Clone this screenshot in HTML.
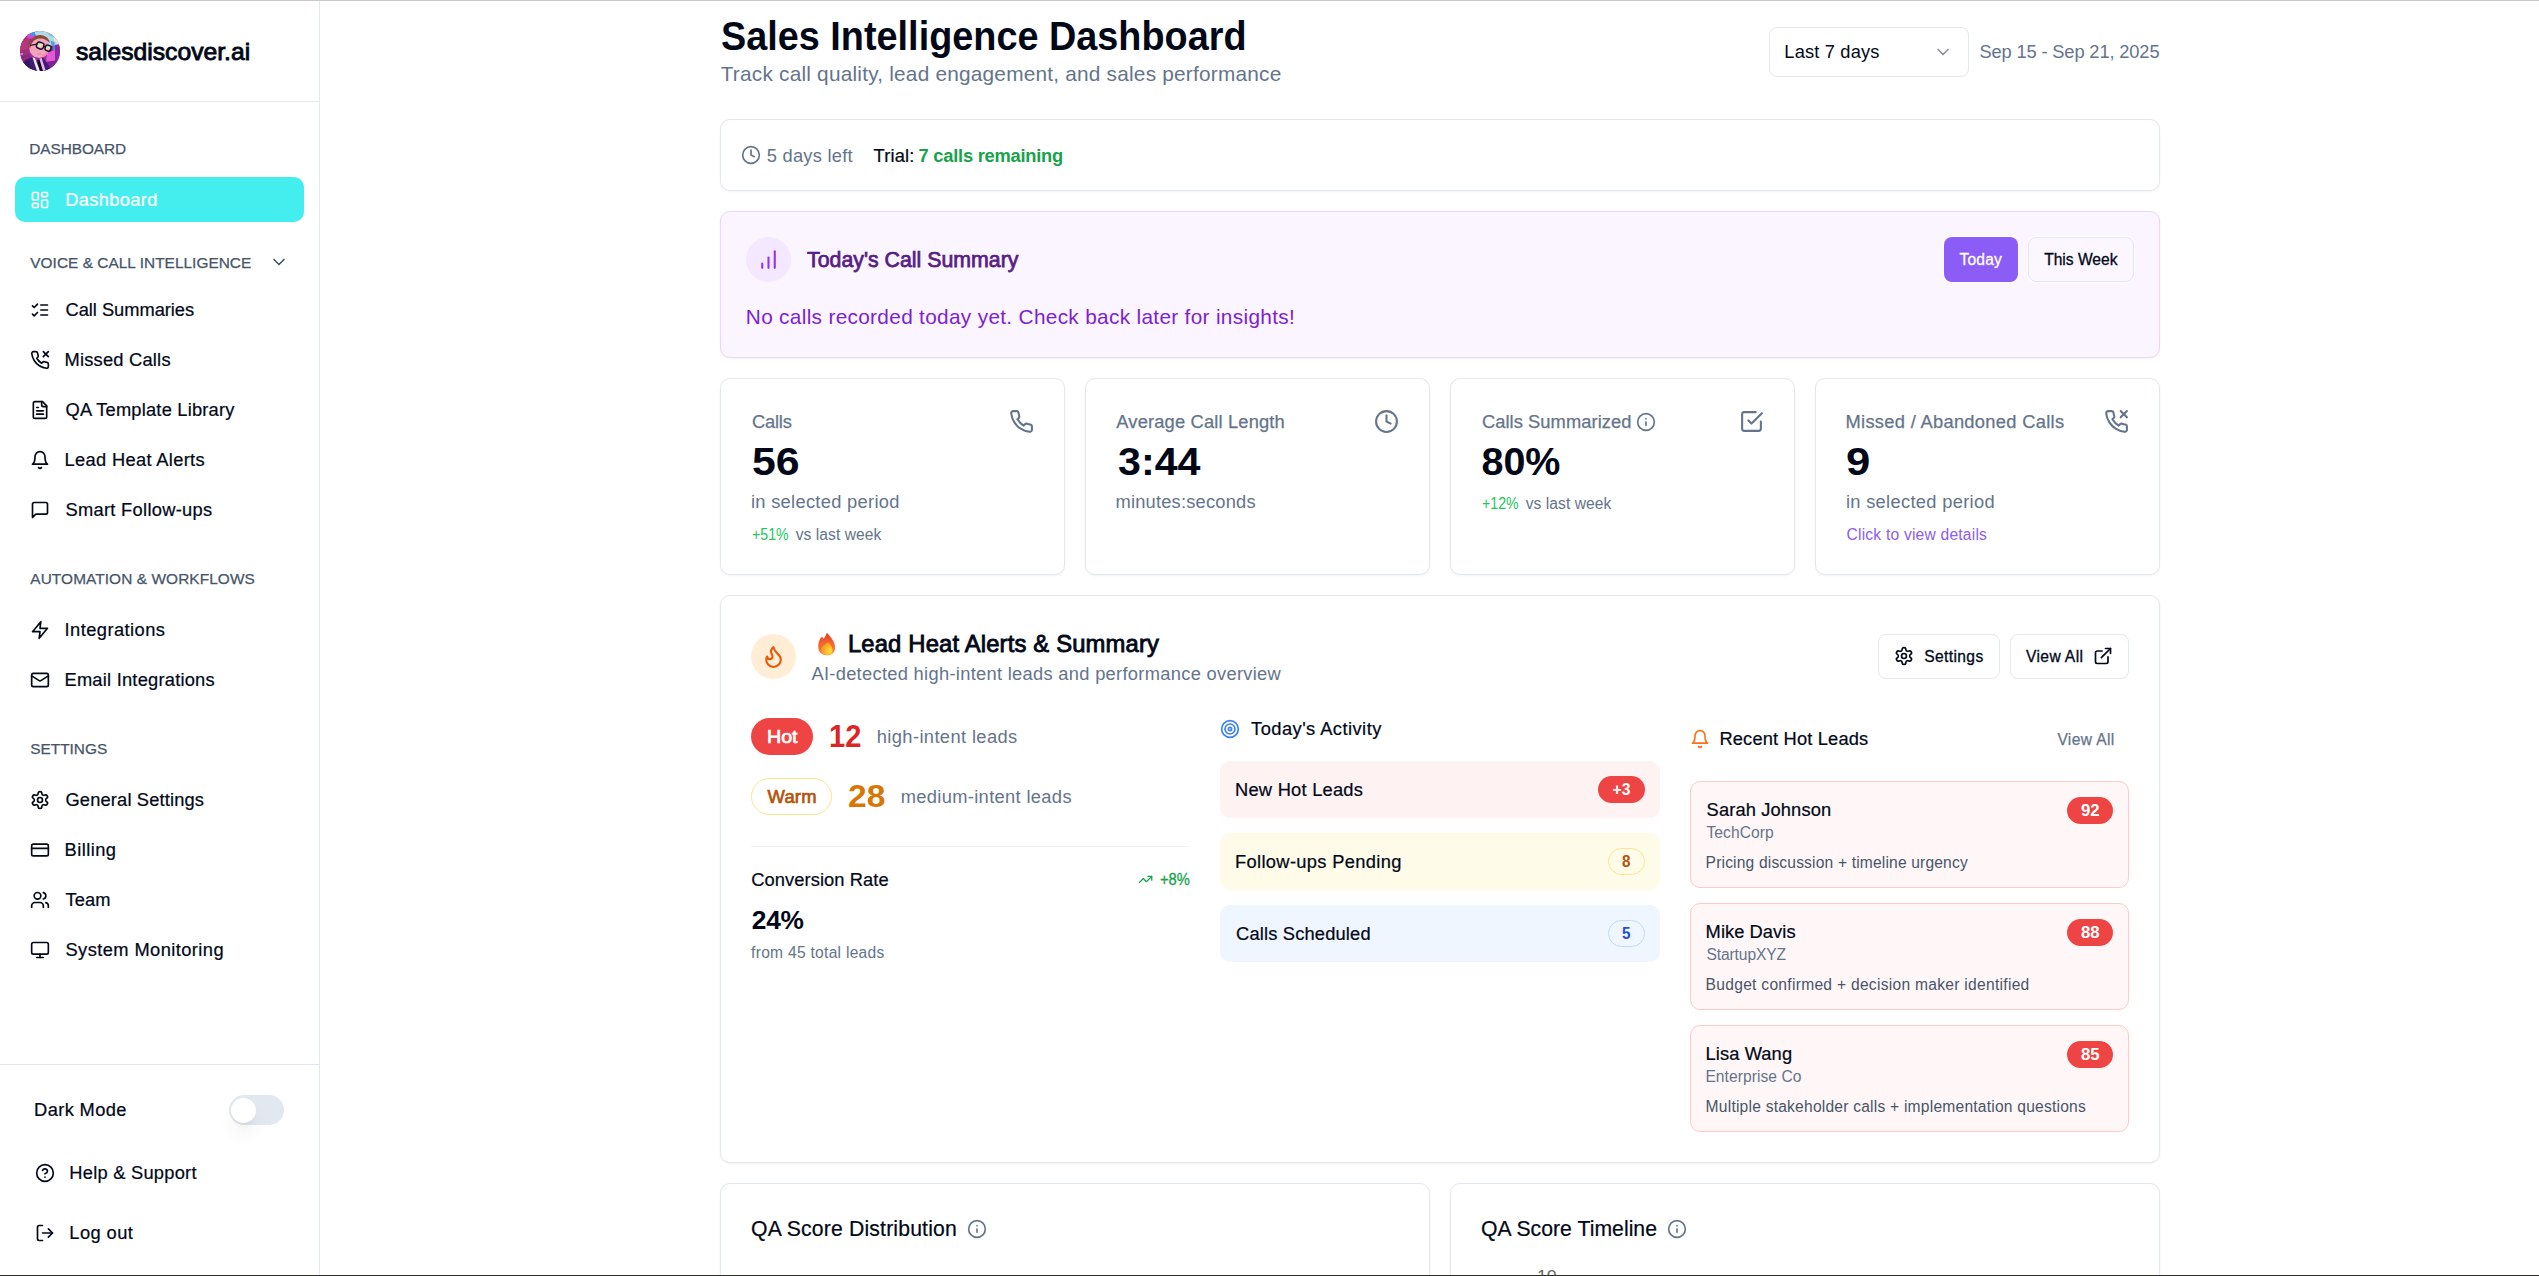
<!DOCTYPE html><html><head><meta charset="utf-8"><title>Sales Intelligence Dashboard</title><style>
html,body{margin:0;padding:0;background:#fff;overflow:hidden;}
body{width:2539px;height:1276px;position:relative;overflow:hidden;font-family:"Liberation Sans", sans-serif;}
.b{position:absolute;box-sizing:border-box;}
.i{position:absolute;overflow:visible;}
.t{position:absolute;white-space:pre;line-height:0;height:0;display:block;}
</style></head><body>
<div class="b" style="left:319px;top:0px;width:1px;height:1276px;background:#e2e8f0;"></div>
<div class="b" style="left:0px;top:101px;width:319px;height:1px;background:#e2e8f0;"></div>
<div class="b" style="left:0px;top:1064px;width:319px;height:1px;background:#e2e8f0;"></div>
<div class="b" style="left:15px;top:177px;width:289px;height:45px;background:#45eeee;border-radius:10px;"></div>
<div class="b" style="left:229px;top:1095px;width:55px;height:30px;background:#e2e8f0;border-radius:15px;"></div>
<div class="b" style="left:230.6px;top:1097.6px;width:25px;height:25px;background:#ffffff;border-radius:12.5px;box-shadow:0 12px 19px -4px rgba(0,0,0,0.1), 0 5px 7.5px -5px rgba(0,0,0,0.1);"></div>
<div class="b" style="left:1769px;top:27px;width:200px;height:50px;background:#fff;border:1px solid #e2e8f0;border-radius:8px;"></div>
<div class="b" style="left:720px;top:119px;width:1440px;height:72px;background:#fff;border:1px solid #e2e8f0;border-radius:10px;box-shadow:0 1px 2.5px 0 rgba(0,0,0,0.05);"></div>
<div class="b" style="left:720px;top:211px;width:1440px;height:147px;background:#faf5ff;border:1px solid #e9d5ff;border-radius:10px;box-shadow:0 1px 2.5px 0 rgba(0,0,0,0.05);"></div>
<div class="b" style="left:746px;top:237px;width:45px;height:45px;background:#f3e8ff;border-radius:22.5px;"></div>
<div class="b" style="left:1944px;top:237px;width:74px;height:45px;background:#8b5cf6;border-radius:8px;box-shadow:0 0 0 1.2px rgba(255,255,255,0.75);"></div>
<div class="b" style="left:2028px;top:237px;width:106px;height:45px;background:#fbf6ff;border:1px solid #e2e8f0;border-radius:8px;box-shadow:0 0 0 1.2px rgba(255,255,255,0.75);"></div>
<div class="b" style="left:720px;top:378px;width:345px;height:197px;background:#fff;border:1px solid #e2e8f0;border-radius:10px;box-shadow:0 1px 2.5px 0 rgba(0,0,0,0.05);"></div>
<div class="b" style="left:1085px;top:378px;width:345px;height:197px;background:#fff;border:1px solid #e2e8f0;border-radius:10px;box-shadow:0 1px 2.5px 0 rgba(0,0,0,0.05);"></div>
<div class="b" style="left:1450px;top:378px;width:345px;height:197px;background:#fff;border:1px solid #e2e8f0;border-radius:10px;box-shadow:0 1px 2.5px 0 rgba(0,0,0,0.05);"></div>
<div class="b" style="left:1815px;top:378px;width:345px;height:197px;background:#fff;border:1px solid #e2e8f0;border-radius:10px;box-shadow:0 1px 2.5px 0 rgba(0,0,0,0.05);"></div>
<div class="b" style="left:720px;top:595px;width:1440px;height:568px;background:#fff;border:1px solid #e2e8f0;border-radius:10px;box-shadow:0 1px 2.5px 0 rgba(0,0,0,0.05);"></div>
<div class="b" style="left:751px;top:634px;width:45px;height:45px;background:#ffedd5;border-radius:22.5px;"></div>
<div class="b" style="left:1878px;top:634px;width:122px;height:45px;background:#fff;border:1px solid #e2e8f0;border-radius:8px;"></div>
<div class="b" style="left:2010px;top:634px;width:119px;height:45px;background:#fff;border:1px solid #e2e8f0;border-radius:8px;"></div>
<div class="b" style="left:751px;top:718px;width:62px;height:37px;background:#ef4444;border-radius:18.5px;"></div>
<div class="b" style="left:751px;top:778px;width:81px;height:37px;background:#fff;border:1px solid #fde68a;border-radius:18.5px;"></div>
<div class="b" style="left:751px;top:846px;width:439px;height:1px;background:#eef2f6;"></div>
<div class="b" style="left:1220px;top:761px;width:440px;height:57px;background:#fef2f2;border-radius:10px;"></div>
<div class="b" style="left:1598px;top:776px;width:47px;height:27px;background:#ef4444;border-radius:13.5px;"></div>
<div class="b" style="left:1220px;top:833px;width:440px;height:57px;background:#fefce8;border-radius:10px;"></div>
<div class="b" style="left:1608px;top:848px;width:37px;height:27px;background:#fefce8;border:1px solid #fde68a;border-radius:13.5px;"></div>
<div class="b" style="left:1220px;top:905px;width:440px;height:57px;background:#eff6ff;border-radius:10px;"></div>
<div class="b" style="left:1608px;top:920px;width:37px;height:27px;background:#eff6ff;border:1px solid #bfdbfe;border-radius:13.5px;"></div>
<div class="b" style="left:1690px;top:781px;width:439px;height:107px;background:#fff7f7;border:1px solid #fecaca;border-radius:10px;"></div>
<div class="b" style="left:2067px;top:797px;width:46px;height:27px;background:#ef4444;border-radius:13.5px;"></div>
<div class="b" style="left:1690px;top:903px;width:439px;height:107px;background:#fff7f7;border:1px solid #fecaca;border-radius:10px;"></div>
<div class="b" style="left:2067px;top:919px;width:46px;height:27px;background:#ef4444;border-radius:13.5px;"></div>
<div class="b" style="left:1690px;top:1025px;width:439px;height:107px;background:#fff7f7;border:1px solid #fecaca;border-radius:10px;"></div>
<div class="b" style="left:2067px;top:1041px;width:46px;height:27px;background:#ef4444;border-radius:13.5px;"></div>
<div class="b" style="left:720px;top:1183px;width:710px;height:120px;background:#fff;border:1px solid #e2e8f0;border-radius:10px;box-shadow:0 1px 2.5px 0 rgba(0,0,0,0.05);"></div>
<div class="b" style="left:1450px;top:1183px;width:710px;height:120px;background:#fff;border:1px solid #e2e8f0;border-radius:10px;box-shadow:0 1px 2.5px 0 rgba(0,0,0,0.05);"></div>
<div class="b" style="left:0px;top:0px;width:2539px;height:1px;background:#c9c9c9;z-index:50;"></div>
<div class="b" style="left:0px;top:1275px;width:2539px;height:1px;background:#2c3029;z-index:50;"></div>
<svg class="i" style="left:30px;top:190px;" width="20" height="20" viewBox="0 0 24 24" fill="none" stroke="#ffffff" stroke-width="2" stroke-linecap="round" stroke-linejoin="round"><rect width="7" height="9" x="3" y="3" rx="1"/><rect width="7" height="5" x="14" y="3" rx="1"/><rect width="7" height="9" x="14" y="12" rx="1"/><rect width="7" height="5" x="3" y="16" rx="1"/></svg>
<svg class="i" style="left:269px;top:252px;" width="20" height="20" viewBox="0 0 24 24" fill="none" stroke="#475569" stroke-width="2" stroke-linecap="round" stroke-linejoin="round"><path d="m6 9 6 6 6-6"/></svg>
<svg class="i" style="left:30px;top:300px;" width="20" height="20" viewBox="0 0 24 24" fill="none" stroke="#020817" stroke-width="2" stroke-linecap="round" stroke-linejoin="round"><path d="m3 17 2 2 4-4"/><path d="m3 7 2 2 4-4"/><path d="M13 6h8"/><path d="M13 12h8"/><path d="M13 18h8"/></svg>
<svg class="i" style="left:30px;top:350px;" width="20" height="20" viewBox="0 0 24 24" fill="none" stroke="#020817" stroke-width="2" stroke-linecap="round" stroke-linejoin="round"><line x1="22" x2="16" y1="2" y2="8"/><line x1="16" x2="22" y1="2" y2="8"/><path d="M22 16.92v3a2 2 0 0 1-2.18 2 19.79 19.79 0 0 1-8.63-3.07 19.5 19.5 0 0 1-6-6 19.79 19.79 0 0 1-3.07-8.67A2 2 0 0 1 4.11 2h3a2 2 0 0 1 2 1.72 12.84 12.84 0 0 0 .7 2.81 2 2 0 0 1-.45 2.11L8.09 9.91a16 16 0 0 0 6 6l1.27-1.27a2 2 0 0 1 2.11-.45 12.84 12.84 0 0 0 2.81.7A2 2 0 0 1 22 16.92z"/></svg>
<svg class="i" style="left:30px;top:400px;" width="20" height="20" viewBox="0 0 24 24" fill="none" stroke="#020817" stroke-width="2" stroke-linecap="round" stroke-linejoin="round"><path d="M15 2H6a2 2 0 0 0-2 2v16a2 2 0 0 0 2 2h12a2 2 0 0 0 2-2V7Z"/><path d="M14 2v4a2 2 0 0 0 2 2h4"/><path d="M10 9H8"/><path d="M16 13H8"/><path d="M16 17H8"/></svg>
<svg class="i" style="left:30px;top:450px;" width="20" height="20" viewBox="0 0 24 24" fill="none" stroke="#020817" stroke-width="2" stroke-linecap="round" stroke-linejoin="round"><path d="M6 8a6 6 0 0 1 12 0c0 7 3 9 3 9H3s3-2 3-9"/><path d="M10.3 21a1.94 1.94 0 0 0 3.4 0"/></svg>
<svg class="i" style="left:30px;top:500px;" width="20" height="20" viewBox="0 0 24 24" fill="none" stroke="#020817" stroke-width="2" stroke-linecap="round" stroke-linejoin="round"><path d="M21 15a2 2 0 0 1-2 2H7l-4 4V5a2 2 0 0 1 2-2h14a2 2 0 0 1 2 2z"/></svg>
<svg class="i" style="left:30px;top:620px;" width="20" height="20" viewBox="0 0 24 24" fill="none" stroke="#020817" stroke-width="2" stroke-linecap="round" stroke-linejoin="round"><polygon points="13 2 3 14 12 14 11 22 21 10 12 10 13 2"/></svg>
<svg class="i" style="left:30px;top:670px;" width="20" height="20" viewBox="0 0 24 24" fill="none" stroke="#020817" stroke-width="2" stroke-linecap="round" stroke-linejoin="round"><rect width="20" height="16" x="2" y="4" rx="2"/><path d="m22 7-8.97 5.7a1.94 1.94 0 0 1-2.06 0L2 7"/></svg>
<svg class="i" style="left:30px;top:790px;" width="20" height="20" viewBox="0 0 24 24" fill="none" stroke="#020817" stroke-width="2" stroke-linecap="round" stroke-linejoin="round"><path d="M12.22 2h-.44a2 2 0 0 0-2 2v.18a2 2 0 0 1-1 1.73l-.43.25a2 2 0 0 1-2 0l-.15-.08a2 2 0 0 0-2.73.73l-.22.38a2 2 0 0 0 .73 2.73l.15.1a2 2 0 0 1 1 1.72v.51a2 2 0 0 1-1 1.74l-.15.09a2 2 0 0 0-.73 2.73l.22.38a2 2 0 0 0 2.73.73l.15-.08a2 2 0 0 1 2 0l.43.25a2 2 0 0 1 1 1.73V20a2 2 0 0 0 2 2h.44a2 2 0 0 0 2-2v-.18a2 2 0 0 1 1-1.73l.43-.25a2 2 0 0 1 2 0l.15.08a2 2 0 0 0 2.73-.73l.22-.39a2 2 0 0 0-.73-2.73l-.15-.08a2 2 0 0 1-1-1.74v-.5a2 2 0 0 1 1-1.74l.15-.09a2 2 0 0 0 .73-2.73l-.22-.38a2 2 0 0 0-2.73-.73l-.15.08a2 2 0 0 1-2 0l-.43-.25a2 2 0 0 1-1-1.73V4a2 2 0 0 0-2-2z"/><circle cx="12" cy="12" r="3"/></svg>
<svg class="i" style="left:30px;top:840px;" width="20" height="20" viewBox="0 0 24 24" fill="none" stroke="#020817" stroke-width="2" stroke-linecap="round" stroke-linejoin="round"><rect width="20" height="14" x="2" y="5" rx="2"/><line x1="2" x2="22" y1="10" y2="10"/></svg>
<svg class="i" style="left:30px;top:890px;" width="20" height="20" viewBox="0 0 24 24" fill="none" stroke="#020817" stroke-width="2" stroke-linecap="round" stroke-linejoin="round"><path d="M16 21v-2a4 4 0 0 0-4-4H6a4 4 0 0 0-4 4v2"/><circle cx="9" cy="7" r="4"/><path d="M22 21v-2a4 4 0 0 0-3-3.87"/><path d="M16 3.13a4 4 0 0 1 0 7.75"/></svg>
<svg class="i" style="left:30px;top:940px;" width="20" height="20" viewBox="0 0 24 24" fill="none" stroke="#020817" stroke-width="2" stroke-linecap="round" stroke-linejoin="round"><rect width="20" height="14" x="2" y="3" rx="2"/><line x1="8" x2="16" y1="21" y2="21"/><line x1="12" x2="12" y1="17" y2="21"/></svg>
<svg class="i" style="left:35px;top:1163px;" width="20" height="20" viewBox="0 0 24 24" fill="none" stroke="#020817" stroke-width="2" stroke-linecap="round" stroke-linejoin="round"><circle cx="12" cy="12" r="10"/><path d="M9.09 9a3 3 0 0 1 5.83 1c0 2-3 3-3 3"/><path d="M12 17h.01"/></svg>
<svg class="i" style="left:35px;top:1223px;" width="20" height="20" viewBox="0 0 24 24" fill="none" stroke="#020817" stroke-width="2" stroke-linecap="round" stroke-linejoin="round"><path d="M9 21H5a2 2 0 0 1-2-2V5a2 2 0 0 1 2-2h4"/><polyline points="16 17 21 12 16 7"/><line x1="21" x2="9" y1="12" y2="12"/></svg>
<svg class="i" style="left:1933px;top:42px;" width="20" height="20" viewBox="0 0 24 24" fill="none" stroke="#8a8f9b" stroke-width="2" stroke-linecap="round" stroke-linejoin="round"><path d="m6 9 6 6 6-6"/></svg>
<svg class="i" style="left:741px;top:145px;" width="20" height="20" viewBox="0 0 24 24" fill="none" stroke="#64748b" stroke-width="2" stroke-linecap="round" stroke-linejoin="round"><circle cx="12" cy="12" r="10"/><polyline points="12 6 12 12 16 14"/></svg>
<svg class="i" style="left:756px;top:247px;" width="25" height="25" viewBox="0 0 24 24" fill="none" stroke="#9333ea" stroke-width="2" stroke-linecap="round" stroke-linejoin="round"><line x1="12" x2="12" y1="20" y2="10"/><line x1="18" x2="18" y1="20" y2="4"/><line x1="6" x2="6" y1="20" y2="16"/></svg>
<svg class="i" style="left:1009px;top:409px;" width="25" height="25" viewBox="0 0 24 24" fill="none" stroke="#64748b" stroke-width="2" stroke-linecap="round" stroke-linejoin="round"><path d="M22 16.92v3a2 2 0 0 1-2.18 2 19.79 19.79 0 0 1-8.63-3.07 19.5 19.5 0 0 1-6-6 19.79 19.79 0 0 1-3.07-8.67A2 2 0 0 1 4.11 2h3a2 2 0 0 1 2 1.72 12.84 12.84 0 0 0 .7 2.81 2 2 0 0 1-.45 2.11L8.09 9.91a16 16 0 0 0 6 6l1.27-1.27a2 2 0 0 1 2.11-.45 12.84 12.84 0 0 0 2.81.7A2 2 0 0 1 22 16.92z"/></svg>
<svg class="i" style="left:1374px;top:409px;" width="25" height="25" viewBox="0 0 24 24" fill="none" stroke="#64748b" stroke-width="2" stroke-linecap="round" stroke-linejoin="round"><circle cx="12" cy="12" r="10"/><polyline points="12 6 12 12 16 14"/></svg>
<svg class="i" style="left:1636px;top:412px;" width="20" height="20" viewBox="0 0 24 24" fill="none" stroke="#64748b" stroke-width="2" stroke-linecap="round" stroke-linejoin="round"><circle cx="12" cy="12" r="10"/><path d="M12 16v-4"/><path d="M12 8h.01"/></svg>
<svg class="i" style="left:1739px;top:409px;" width="25" height="25" viewBox="0 0 24 24" fill="none" stroke="#64748b" stroke-width="2" stroke-linecap="round" stroke-linejoin="round"><path d="m9 11 3 3L22 4"/><path d="M21 12v7a2 2 0 0 1-2 2H5a2 2 0 0 1-2-2V5a2 2 0 0 1 2-2h11"/></svg>
<svg class="i" style="left:2104px;top:409px;" width="25" height="25" viewBox="0 0 24 24" fill="none" stroke="#64748b" stroke-width="2" stroke-linecap="round" stroke-linejoin="round"><line x1="22" x2="16" y1="2" y2="8"/><line x1="16" x2="22" y1="2" y2="8"/><path d="M22 16.92v3a2 2 0 0 1-2.18 2 19.79 19.79 0 0 1-8.63-3.07 19.5 19.5 0 0 1-6-6 19.79 19.79 0 0 1-3.07-8.67A2 2 0 0 1 4.11 2h3a2 2 0 0 1 2 1.72 12.84 12.84 0 0 0 .7 2.81 2 2 0 0 1-.45 2.11L8.09 9.91a16 16 0 0 0 6 6l1.27-1.27a2 2 0 0 1 2.11-.45 12.84 12.84 0 0 0 2.81.7A2 2 0 0 1 22 16.92z"/></svg>
<svg class="i" style="left:761px;top:644px;" width="25" height="25" viewBox="0 0 24 24" fill="none" stroke="#ea580c" stroke-width="2" stroke-linecap="round" stroke-linejoin="round"><path d="M8.5 14.5A2.5 2.5 0 0 0 11 12c0-1.38-.5-2-1-3-1.072-2.143-.224-4.054 2-6 .5 2.5 2 4.9 4 6.5 2 1.6 3 3.5 3 5.5a7 7 0 1 1-14 0c0-1.153.433-2.294 1-3a2.5 2.5 0 0 0 2.5 2.5z"/></svg>
<svg class="i" style="left:817.8px;top:632.7px" width="17.2" height="22.6" viewBox="0 0 17.2 22.6">
<defs><linearGradient id="fg1" x1="0" y1="0" x2="0" y2="1"><stop offset="0" stop-color="#ee352b"/><stop offset="0.35" stop-color="#f25d2c"/><stop offset="0.7" stop-color="#f87a2c"/><stop offset="1" stop-color="#f98a2e"/></linearGradient>
<radialGradient id="fg2" cx="12.4" cy="18" r="9.5" gradientUnits="userSpaceOnUse"><stop offset="0" stop-color="#ffdc2e"/><stop offset="0.45" stop-color="#ffbe30"/><stop offset="1" stop-color="#f98f2e"/></radialGradient></defs>
<path d="M8.7 0.1 C9 -0.1 9.3 0.2 9.6 0.6 C12.4 4 17.1 8.6 17.1 14.4 C17.1 19.4 13.6 22.3 9 22.3 C4 22.3 0.2 19.4 0.2 13.8 C0.2 10 1.3 6.6 3 4.6 C3.5 4 4.2 4 4.7 4.5 C5 4.9 5.3 5.3 5.6 5.8 C6.9 4.3 8 2.4 8.7 0.1 Z" fill="url(#fg1)"/>
<path d="M3.6 4.6 C2.6 7 1.9 10 2.1 13.2 C2.3 15.6 3 17.6 4 19" fill="none" stroke="#d9482a" stroke-opacity="0.45" stroke-width="0.7"/>
<path d="M9.1 9.6 C9.5 9.1 10 9.1 10.4 9.6 C12.4 11.8 14.7 14.2 14.7 17.4 C14.7 20.3 12.5 22 9.2 22 C5.5 22 3.1 20 3.1 17.1 C3.1 14 6.8 12.2 9.1 9.6 Z" fill="url(#fg2)"/>
</svg>
<svg class="i" style="left:1894px;top:646px;" width="20" height="20" viewBox="0 0 24 24" fill="none" stroke="#020817" stroke-width="2" stroke-linecap="round" stroke-linejoin="round"><path d="M12.22 2h-.44a2 2 0 0 0-2 2v.18a2 2 0 0 1-1 1.73l-.43.25a2 2 0 0 1-2 0l-.15-.08a2 2 0 0 0-2.73.73l-.22.38a2 2 0 0 0 .73 2.73l.15.1a2 2 0 0 1 1 1.72v.51a2 2 0 0 1-1 1.74l-.15.09a2 2 0 0 0-.73 2.73l.22.38a2 2 0 0 0 2.73.73l.15-.08a2 2 0 0 1 2 0l.43.25a2 2 0 0 1 1 1.73V20a2 2 0 0 0 2 2h.44a2 2 0 0 0 2-2v-.18a2 2 0 0 1 1-1.73l.43-.25a2 2 0 0 1 2 0l.15.08a2 2 0 0 0 2.73-.73l.22-.39a2 2 0 0 0-.73-2.73l-.15-.08a2 2 0 0 1-1-1.74v-.5a2 2 0 0 1 1-1.74l.15-.09a2 2 0 0 0 .73-2.73l-.22-.38a2 2 0 0 0-2.73-.73l-.15.08a2 2 0 0 1-2 0l-.43-.25a2 2 0 0 1-1-1.73V4a2 2 0 0 0-2-2z"/><circle cx="12" cy="12" r="3"/></svg>
<svg class="i" style="left:2093px;top:646px;" width="20" height="20" viewBox="0 0 24 24" fill="none" stroke="#020817" stroke-width="2" stroke-linecap="round" stroke-linejoin="round"><path d="M15 3h6v6"/><path d="M10 14 21 3"/><path d="M18 13v6a2 2 0 0 1-2 2H5a2 2 0 0 1-2-2V8a2 2 0 0 1 2-2h6"/></svg>
<svg class="i" style="left:1138px;top:872px;" width="15" height="15" viewBox="0 0 24 24" fill="none" stroke="#16a34a" stroke-width="2" stroke-linecap="round" stroke-linejoin="round"><polyline points="22 7 13.5 15.5 8.5 10.5 2 17"/><polyline points="16 7 22 7 22 13"/></svg>
<svg class="i" style="left:1220px;top:719px;" width="20" height="20" viewBox="0 0 24 24" fill="none" stroke="#3b82f6" stroke-width="2" stroke-linecap="round" stroke-linejoin="round"><circle cx="12" cy="12" r="10"/><circle cx="12" cy="12" r="6"/><circle cx="12" cy="12" r="2"/></svg>
<svg class="i" style="left:1690px;top:729px;" width="20" height="20" viewBox="0 0 24 24" fill="none" stroke="#f97316" stroke-width="2" stroke-linecap="round" stroke-linejoin="round"><path d="M6 8a6 6 0 0 1 12 0c0 7 3 9 3 9H3s3-2 3-9"/><path d="M10.3 21a1.94 1.94 0 0 0 3.4 0"/></svg>
<svg class="i" style="left:967px;top:1219px;" width="20" height="20" viewBox="0 0 24 24" fill="none" stroke="#64748b" stroke-width="2" stroke-linecap="round" stroke-linejoin="round"><circle cx="12" cy="12" r="10"/><path d="M12 16v-4"/><path d="M12 8h.01"/></svg>
<svg class="i" style="left:1667px;top:1219px;" width="20" height="20" viewBox="0 0 24 24" fill="none" stroke="#64748b" stroke-width="2" stroke-linecap="round" stroke-linejoin="round"><circle cx="12" cy="12" r="10"/><path d="M12 16v-4"/><path d="M12 8h.01"/></svg>
<svg class="i" style="left:20px;top:31px" width="40" height="40" viewBox="0 0 40 40">
<defs><clipPath id="lc"><circle cx="20" cy="20" r="20"/></clipPath>
<linearGradient id="lens" x1="0" y1="0" x2="1" y2="1"><stop offset="0" stop-color="#38b6e8"/><stop offset="0.45" stop-color="#f2ee9a"/><stop offset="0.75" stop-color="#f7a6d8"/><stop offset="1" stop-color="#6fe0e0"/></linearGradient></defs>
<g clip-path="url(#lc)">
<rect width="40" height="40" fill="#a02c96"/>
<path d="M0 3 L12 0 L10 12 L7 26 L0 28 Z" fill="#a62d70"/>
<path d="M2 10 L9 7 L8 18 L0 20 Z" fill="#b23a7c"/>
<path d="M6 3 C10 0 16 0 24 3 L16 7 L8 8 Z" fill="#d247d6"/>
<path d="M9 2 L17 0 L20 2 L12 5 Z" fill="#27a6ea"/>
<path d="M15 0 H40 V15.5 L33 14.5 L26 15 L15 3 Z" fill="#aedbe6"/>
<path d="M27 2 L33 3.5 L35 6 L30 5 Z" fill="#7fb4d4" opacity="0.8"/><path d="M33 6 L38 9 L39 14 L35 11 Z" fill="#f4e6c8" opacity="0.8"/>
<path d="M30.5 9.5 L34.5 11 L35 15 L31.5 14 Z" fill="#4a7fe0" opacity="0.75"/><path d="M33 15 L35.5 15 L35.5 22 L33 22 Z" fill="#1f9be8" opacity="0.85"/>
<path d="M27 22 L40 17 V31 L26 32 Z" fill="#e457d6"/>
<path d="M35 14 L40 13 V30 L35 30 Z" fill="#8b2a9b"/>
<path d="M24 31 L40 29 V40 H24 Z" fill="#7c2494"/>
<path d="M0 26 L9 23 L12 30 L0 35 Z" fill="#7a2c90"/>
<path d="M0 22.5 L3 22 L3 23.5 L0 24 Z" fill="#b9a6f0"/>
<ellipse cx="19.2" cy="16.5" rx="10" ry="10.6" fill="#f4a3bd"/>
<path d="M22 24 C25 23 28 19 28.6 15 C29.6 18 28 24 23 26.5 Z" fill="#e78fb0"/>
<path d="M9.3 17 C8.6 9 15 3.4 21.5 4.2 C26.5 4.8 29.5 8.5 30 12.2 C27 8.4 22.5 6.8 18.5 7.6 C14 8.6 11 12 10.6 16.6 Z" fill="#8b4a2e"/>
<path d="M10.6 14.4 L16.6 13.2" stroke="#2a1230" stroke-width="1.3" fill="none" stroke-linecap="round"/>
<rect x="16.6" y="11.4" width="7.2" height="6.4" rx="2.6" transform="rotate(18 20.2 14.6)" fill="url(#lens)" stroke="#1c1030" stroke-width="1.5"/>
<rect x="25.2" y="14.3" width="5.8" height="5.6" rx="2.3" transform="rotate(18 28 17)" fill="url(#lens)" stroke="#1c1030" stroke-width="1.5"/>
<path d="M23.6 15 L25.4 16" stroke="#1c1030" stroke-width="1.2"/>
<path d="M17.4 22.8 C18.6 23.3 20 23.3 21 23" stroke="#c9708f" stroke-width="0.6" fill="none"/>
<path d="M0 31 L12.4 26 L17 31 L23 26.6 L29.5 36 L30 40 L0 40 Z" fill="#3f1c74"/>
<path d="M0 33 L8 29.5 L13 40 L0 40 Z" fill="#33175f"/>
<path d="M12.4 26 L15 27.2 L20 40 L17 40 Z" fill="#f6eef6"/>
<path d="M17.2 29 L19.4 28.6 L23 40 L20 40 Z" fill="#130a26"/>
<path d="M19.4 27.8 L21.6 27 L25.8 40 L23 40 Z" fill="#e9b4ea"/>
<path d="M4 27.6 L6 26.8 L6.6 28 L4.6 28.8 Z M6.6 26 L8.4 25.6 L8.6 27 L7 27.4 Z M3 29.4 L4.6 29.2 L4.4 30.4 L3 30.4 Z" fill="#d0243f"/>
</g></svg>
<span class="t" style="left:76.00px;top:52.25px;font-size:23.2px;color:#020817;letter-spacing:0.000px;transform:scaleX(1.0638);transform-origin:0 0;-webkit-text-stroke:0.85px #020817;">salesdiscover.ai</span>
<span class="t" style="left:29.30px;top:148.75px;font-size:15.4px;color:#475569;letter-spacing:-0.084px;-webkit-text-stroke:0.25px #475569;">DASHBOARD</span>
<span class="t" style="left:65.20px;top:199.75px;font-size:18.3px;color:#ffffff;letter-spacing:0.353px;-webkit-text-stroke:0.22px #ffffff;">Dashboard</span>
<span class="t" style="left:30.30px;top:262.75px;font-size:15.4px;color:#475569;letter-spacing:0.036px;-webkit-text-stroke:0.25px #475569;">VOICE &amp; CALL INTELLIGENCE</span>
<span class="t" style="left:65.50px;top:309.75px;font-size:18.3px;color:#020817;letter-spacing:-0.029px;-webkit-text-stroke:0.22px #020817;">Call Summaries</span>
<span class="t" style="left:64.50px;top:359.75px;font-size:18.3px;color:#020817;letter-spacing:0.219px;-webkit-text-stroke:0.22px #020817;">Missed Calls</span>
<span class="t" style="left:65.50px;top:409.75px;font-size:18.3px;color:#020817;letter-spacing:0.197px;-webkit-text-stroke:0.22px #020817;">QA Template Library</span>
<span class="t" style="left:64.50px;top:459.75px;font-size:18.3px;color:#020817;letter-spacing:0.331px;-webkit-text-stroke:0.22px #020817;">Lead Heat Alerts</span>
<span class="t" style="left:65.50px;top:509.75px;font-size:18.3px;color:#020817;letter-spacing:0.294px;-webkit-text-stroke:0.22px #020817;">Smart Follow-ups</span>
<span class="t" style="left:30.30px;top:578.75px;font-size:15.4px;color:#475569;letter-spacing:0.089px;-webkit-text-stroke:0.25px #475569;">AUTOMATION &amp; WORKFLOWS</span>
<span class="t" style="left:64.50px;top:629.75px;font-size:18.3px;color:#020817;letter-spacing:0.446px;-webkit-text-stroke:0.22px #020817;">Integrations</span>
<span class="t" style="left:64.50px;top:679.75px;font-size:18.3px;color:#020817;letter-spacing:0.225px;-webkit-text-stroke:0.22px #020817;">Email Integrations</span>
<span class="t" style="left:30.30px;top:748.75px;font-size:15.4px;color:#475569;letter-spacing:-0.014px;-webkit-text-stroke:0.25px #475569;">SETTINGS</span>
<span class="t" style="left:65.50px;top:799.75px;font-size:18.3px;color:#020817;letter-spacing:0.151px;-webkit-text-stroke:0.22px #020817;">General Settings</span>
<span class="t" style="left:64.50px;top:849.75px;font-size:18.3px;color:#020817;letter-spacing:0.446px;-webkit-text-stroke:0.22px #020817;">Billing</span>
<span class="t" style="left:65.50px;top:899.75px;font-size:18.3px;color:#020817;letter-spacing:0.107px;-webkit-text-stroke:0.22px #020817;">Team</span>
<span class="t" style="left:65.50px;top:949.75px;font-size:18.3px;color:#020817;letter-spacing:0.417px;-webkit-text-stroke:0.22px #020817;">System Monitoring</span>
<span class="t" style="left:34.10px;top:1109.75px;font-size:18.3px;color:#020817;letter-spacing:0.370px;-webkit-text-stroke:0.22px #020817;">Dark Mode</span>
<span class="t" style="left:69.30px;top:1172.75px;font-size:18.3px;color:#020817;letter-spacing:0.245px;-webkit-text-stroke:0.22px #020817;">Help &amp; Support</span>
<span class="t" style="left:69.30px;top:1232.75px;font-size:18.3px;color:#020817;letter-spacing:0.429px;-webkit-text-stroke:0.22px #020817;">Log out</span>
<span class="t" style="left:721.07px;top:36.25px;font-size:40.5px;color:#020817;letter-spacing:0.000px;font-weight:700;transform:scaleX(0.9340);transform-origin:0 0;">Sales Intelligence Dashboard</span>
<span class="t" style="left:720.70px;top:73.75px;font-size:20.8px;color:#64748b;letter-spacing:0.221px;">Track call quality, lead engagement, and sales performance</span>
<span class="t" style="left:1784.30px;top:51.75px;font-size:18.3px;color:#020817;letter-spacing:0.163px;">Last 7 days</span>
<span class="t" style="left:1979.40px;top:51.75px;font-size:18.3px;color:#64748b;letter-spacing:-0.140px;">Sep 15 - Sep 21, 2025</span>
<span class="t" style="left:766.80px;top:155.75px;font-size:18.3px;color:#64748b;letter-spacing:0.244px;">5 days left</span>
<span class="t" style="left:873.60px;top:155.75px;font-size:18.3px;color:#020817;letter-spacing:0.167px;-webkit-text-stroke:0.22px #020817;">Trial:</span>
<span class="t" style="left:918.60px;top:155.75px;font-size:18.3px;color:#16a34a;letter-spacing:-0.237px;font-weight:700;">7 calls remaining</span>
<span class="t" style="left:807.00px;top:260.25px;font-size:21.3px;color:#581c87;letter-spacing:0.013px;-webkit-text-stroke:0.75px #581c87;">Today's Call Summary</span>
<span class="t" style="left:745.80px;top:316.75px;font-size:20.8px;color:#7e22ce;letter-spacing:0.317px;">No calls recorded today yet. Check back later for insights!</span>
<span class="t" style="left:1959.60px;top:259.75px;font-size:15.6px;color:#fff;letter-spacing:0.146px;-webkit-text-stroke:0.3px #fff;">Today</span>
<span class="t" style="left:2044.20px;top:259.75px;font-size:15.6px;color:#020817;letter-spacing:-0.009px;-webkit-text-stroke:0.3px #020817;">This Week</span>
<span class="t" style="left:751.90px;top:421.75px;font-size:18.3px;color:#64748b;letter-spacing:-0.175px;-webkit-text-stroke:0.25px #64748b;">Calls</span>
<span class="t" style="left:751.52px;top:461.25px;font-size:39.5px;color:#020817;letter-spacing:0.000px;font-weight:700;transform:scaleX(1.0817);transform-origin:0 0;">56</span>
<span class="t" style="left:750.90px;top:501.75px;font-size:18.3px;color:#64748b;letter-spacing:0.309px;">in selected period</span>
<span class="t" style="left:752.30px;top:534.75px;font-size:15.6px;color:#22c55e;letter-spacing:0.000px;transform:scaleX(0.9070);transform-origin:0 0;">+51%</span>
<span class="t" style="left:795.70px;top:534.75px;font-size:15.6px;color:#64748b;letter-spacing:0.069px;">vs last week</span>
<span class="t" style="left:1116.30px;top:421.75px;font-size:18.3px;color:#64748b;letter-spacing:0.174px;-webkit-text-stroke:0.25px #64748b;">Average Call Length</span>
<span class="t" style="left:1117.70px;top:461.25px;font-size:39.5px;color:#020817;letter-spacing:0.000px;font-weight:700;transform:scaleX(1.0431);transform-origin:0 0;">3:44</span>
<span class="t" style="left:1115.50px;top:501.75px;font-size:18.3px;color:#64748b;letter-spacing:0.203px;">minutes:seconds</span>
<span class="t" style="left:1481.90px;top:421.75px;font-size:18.3px;color:#64748b;letter-spacing:0.082px;-webkit-text-stroke:0.25px #64748b;">Calls Summarized</span>
<span class="t" style="left:1481.60px;top:461.25px;font-size:39.5px;color:#020817;letter-spacing:-0.176px;font-weight:700;">80%</span>
<span class="t" style="left:1482.30px;top:503.75px;font-size:15.6px;color:#22c55e;letter-spacing:0.000px;transform:scaleX(0.9070);transform-origin:0 0;">+12%</span>
<span class="t" style="left:1525.70px;top:503.75px;font-size:15.6px;color:#64748b;letter-spacing:0.069px;">vs last week</span>
<span class="t" style="left:1845.50px;top:421.75px;font-size:18.3px;color:#64748b;letter-spacing:0.311px;-webkit-text-stroke:0.25px #64748b;">Missed / Abandoned Calls</span>
<span class="t" style="left:1846.10px;top:461.25px;font-size:39.5px;color:#020817;letter-spacing:0.000px;font-weight:700;transform:scaleX(1.1050);transform-origin:0 0;">9</span>
<span class="t" style="left:1845.90px;top:501.75px;font-size:18.3px;color:#64748b;letter-spacing:0.321px;">in selected period</span>
<span class="t" style="left:1846.50px;top:534.75px;font-size:15.6px;color:#8b5cf6;letter-spacing:0.216px;">Click to view details</span>
<span class="t" style="left:847.90px;top:643.75px;font-size:23.8px;color:#020817;letter-spacing:0.169px;-webkit-text-stroke:0.85px #020817;">Lead Heat Alerts &amp; Summary</span>
<span class="t" style="left:811.40px;top:673.75px;font-size:18.3px;color:#64748b;letter-spacing:0.305px;">AI-detected high-intent leads and performance overview</span>
<span class="t" style="left:1924.30px;top:656.75px;font-size:15.6px;color:#020817;letter-spacing:0.364px;-webkit-text-stroke:0.3px #020817;">Settings</span>
<span class="t" style="left:2026.00px;top:656.75px;font-size:15.6px;color:#020817;letter-spacing:0.376px;-webkit-text-stroke:0.3px #020817;">View All</span>
<span class="t" style="left:766.53px;top:736.75px;font-size:18.4px;color:#fff;letter-spacing:0.000px;transform:scaleX(1.0685);transform-origin:0 0;-webkit-text-stroke:0.7px #fff;">Hot</span>
<span class="t" style="left:828.58px;top:736.25px;font-size:31.5px;color:#dc2626;letter-spacing:0.000px;font-weight:700;transform:scaleX(0.9216);transform-origin:0 0;">12</span>
<span class="t" style="left:876.80px;top:736.75px;font-size:18.3px;color:#64748b;letter-spacing:0.386px;">high-intent leads</span>
<span class="t" style="left:767.60px;top:796.75px;font-size:18.4px;color:#b45309;letter-spacing:0.186px;-webkit-text-stroke:0.7px #b45309;">Warm</span>
<span class="t" style="left:847.54px;top:796.25px;font-size:31.5px;color:#d97706;letter-spacing:0.000px;font-weight:700;transform:scaleX(1.0648);transform-origin:0 0;">28</span>
<span class="t" style="left:900.70px;top:796.75px;font-size:18.3px;color:#64748b;letter-spacing:0.346px;">medium-intent leads</span>
<span class="t" style="left:751.30px;top:879.75px;font-size:18.3px;color:#020817;letter-spacing:0.085px;-webkit-text-stroke:0.22px #020817;">Conversion Rate</span>
<span class="t" style="left:1159.50px;top:879.75px;font-size:15.6px;color:#16a34a;letter-spacing:0.000px;transform:scaleX(0.9437);transform-origin:0 0;-webkit-text-stroke:0.3px #16a34a;">+8%</span>
<span class="t" style="left:751.80px;top:920.25px;font-size:26.3px;color:#020817;letter-spacing:-0.276px;font-weight:700;">24%</span>
<span class="t" style="left:751.10px;top:952.75px;font-size:15.6px;color:#64748b;letter-spacing:0.273px;">from 45 total leads</span>
<span class="t" style="left:1251.10px;top:728.75px;font-size:18.3px;color:#020817;letter-spacing:0.456px;-webkit-text-stroke:0.22px #020817;">Today's Activity</span>
<span class="t" style="left:1235.00px;top:789.75px;font-size:18.3px;color:#020817;letter-spacing:0.245px;-webkit-text-stroke:0.22px #020817;">New Hot Leads</span>
<span class="t" style="left:1612.50px;top:789.75px;font-size:15.6px;color:#fff;letter-spacing:0.086px;font-weight:700;">+3</span>
<span class="t" style="left:1235.00px;top:861.75px;font-size:18.3px;color:#020817;letter-spacing:0.347px;-webkit-text-stroke:0.22px #020817;">Follow-ups Pending</span>
<span class="t" style="left:1621.70px;top:861.75px;font-size:15.6px;color:#b45309;letter-spacing:0.000px;font-weight:700;transform:scaleX(0.9762);transform-origin:0 0;">8</span>
<span class="t" style="left:1236.00px;top:933.75px;font-size:18.3px;color:#020817;letter-spacing:0.175px;-webkit-text-stroke:0.22px #020817;">Calls Scheduled</span>
<span class="t" style="left:1622.30px;top:933.75px;font-size:15.6px;color:#1d4ed8;letter-spacing:0.000px;font-weight:700;transform:scaleX(0.9762);transform-origin:0 0;">5</span>
<span class="t" style="left:1719.40px;top:738.75px;font-size:18.3px;color:#020817;letter-spacing:0.167px;-webkit-text-stroke:0.22px #020817;">Recent Hot Leads</span>
<span class="t" style="left:2057.40px;top:739.75px;font-size:15.6px;color:#64748b;letter-spacing:0.363px;-webkit-text-stroke:0.25px #64748b;">View All</span>
<span class="t" style="left:1706.60px;top:809.75px;font-size:18.3px;color:#020817;letter-spacing:0.132px;-webkit-text-stroke:0.22px #020817;">Sarah Johnson</span>
<span class="t" style="left:1706.40px;top:832.75px;font-size:15.6px;color:#64748b;letter-spacing:0.090px;">TechCorp</span>
<span class="t" style="left:1705.60px;top:862.75px;font-size:15.6px;color:#475569;letter-spacing:0.166px;">Pricing discussion + timeline urgency</span>
<span class="t" style="left:2080.50px;top:810.75px;font-size:15.6px;color:#fff;letter-spacing:0.000px;font-weight:700;transform:scaleX(1.0742);transform-origin:0 0;">92</span>
<span class="t" style="left:1705.60px;top:931.75px;font-size:18.3px;color:#020817;letter-spacing:0.061px;-webkit-text-stroke:0.22px #020817;">Mike Davis</span>
<span class="t" style="left:1706.40px;top:954.75px;font-size:15.6px;color:#64748b;letter-spacing:-0.098px;">StartupXYZ</span>
<span class="t" style="left:1705.60px;top:984.75px;font-size:15.6px;color:#475569;letter-spacing:0.281px;">Budget confirmed + decision maker identified</span>
<span class="t" style="left:2080.50px;top:932.75px;font-size:15.6px;color:#fff;letter-spacing:0.000px;font-weight:700;transform:scaleX(1.0742);transform-origin:0 0;">88</span>
<span class="t" style="left:1705.60px;top:1053.75px;font-size:18.3px;color:#020817;letter-spacing:0.096px;-webkit-text-stroke:0.22px #020817;">Lisa Wang</span>
<span class="t" style="left:1705.40px;top:1076.75px;font-size:15.6px;color:#64748b;letter-spacing:0.060px;">Enterprise Co</span>
<span class="t" style="left:1705.60px;top:1106.75px;font-size:15.6px;color:#475569;letter-spacing:0.219px;">Multiple stakeholder calls + implementation questions</span>
<span class="t" style="left:2080.50px;top:1054.75px;font-size:15.6px;color:#fff;letter-spacing:0.000px;font-weight:700;transform:scaleX(1.0742);transform-origin:0 0;">85</span>
<span class="t" style="left:751.00px;top:1228.75px;font-size:21.2px;color:#020817;letter-spacing:0.161px;-webkit-text-stroke:0.22px #020817;">QA Score Distribution</span>
<span class="t" style="left:1481.00px;top:1228.75px;font-size:21.2px;color:#020817;letter-spacing:0.032px;-webkit-text-stroke:0.22px #020817;">QA Score Timeline</span>
<span class="t" style="left:1536.67px;top:1276.75px;font-size:15.6px;color:#666666;letter-spacing:0.000px;transform:scaleX(1.1326);transform-origin:0 0;">10</span>
</body></html>
